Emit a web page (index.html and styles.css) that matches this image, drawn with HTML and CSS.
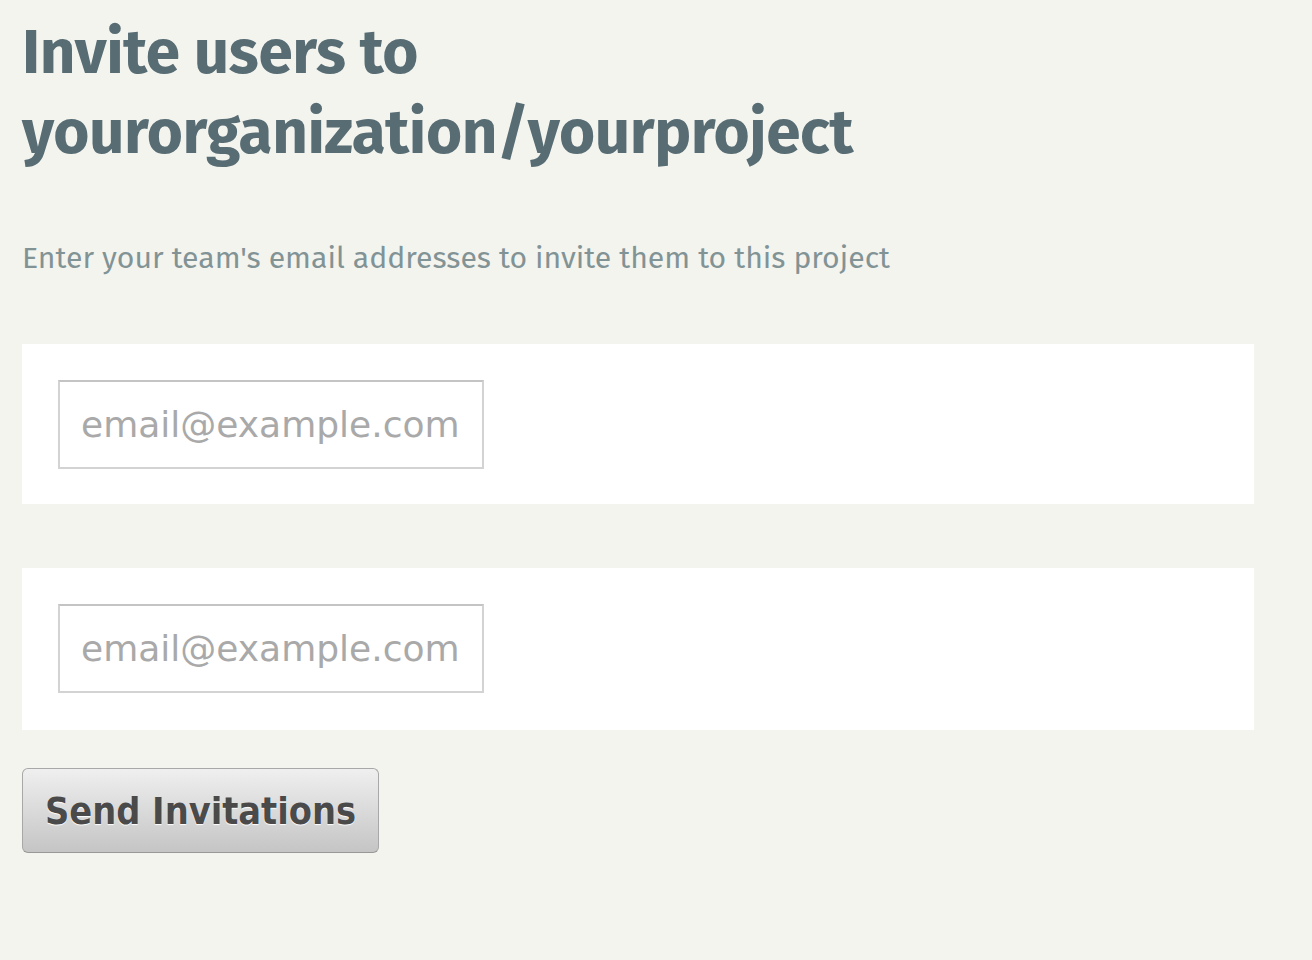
FILE: index.html
```html
<!DOCTYPE html>
<html>
<head>
  <meta charset="utf-8">
  <meta name="viewport" content="width=device-width">
  <title>Invite users</title>
  <link rel="stylesheet" href="styles.css">
</head>
<body>
<div class="invite">
  <h1 class="invite-title">Invite users to<br>yourorganization/yourproject</h1>
  <p class="invite-lead">Enter your team's email addresses to invite them to this project</p>

  <form class="invite-form" action="#">
    <div class="invite-row">
      <input class="invite-email" type="email" name="email[]" placeholder="email@example.com">
    </div>
    <div class="invite-row">
      <input class="invite-email" type="email" name="email[]" placeholder="email@example.com">
    </div>
    <button class="invite-send" type="submit">Send Invitations</button>
  </form>
</div>
</body>
</html>
```
FILE: styles.css
```css
* {
  margin: 0;
  padding: 0;
  box-sizing: border-box;
}
body {
  background-color: #f4f4ef;
}
.invite {
  width: 1232px;
  margin-left: 22px;
  padding-top: 12px;
}
.invite-title {
  font-family: "Fira Sans", "Lato", sans-serif;
  font-weight: 700;
  font-size: 62px;
  line-height: 80px;
  letter-spacing: -0.4px;
  color: #576c73;
}
.invite-lead {
  margin-top: 68px;
  font-family: "Fira Sans", "Lato", sans-serif;
  font-size: 30.2px;
  line-height: 36px;
  color: #829396;
}
.invite-form {
  margin-top: 68px;
}
.invite-row {
  background-color: #fff;
  padding: 36px 36px 35px;
  margin-bottom: 64px;
}
.invite-row:last-of-type {
  padding-bottom: 37px;
  margin-bottom: 38px;
}
.invite-email {
  display: block;
  width: 426px;
  height: 89px;
  padding: 0 21px;
  border: 2px solid #d3d3d3;
  border-top-color: #c4c4c4;
  background-color: #fff;
  font-family: "DejaVu Sans", sans-serif;
  font-size: 36px;
  color: #444;
  outline: none;
}
.invite-email::placeholder {
  color: #a9a9a9;
}
.invite-send {
  display: block;
  width: 357px;
  height: 85px;
  padding: 0 0 0 22px;
  text-align: left;
  border: 1px solid #a8a8a8;
  border-bottom-color: #989898;
  border-radius: 6px;
  background: linear-gradient(#efefef, #c5c5c5);
  font-family: "DejaVu Sans Condensed", "DejaVu Sans", sans-serif;
  font-weight: 700;
  font-size: 37.5px;
  color: #4a4a4a;
  text-shadow: 0 1px 1px #fff;
  cursor: pointer;
}
```
